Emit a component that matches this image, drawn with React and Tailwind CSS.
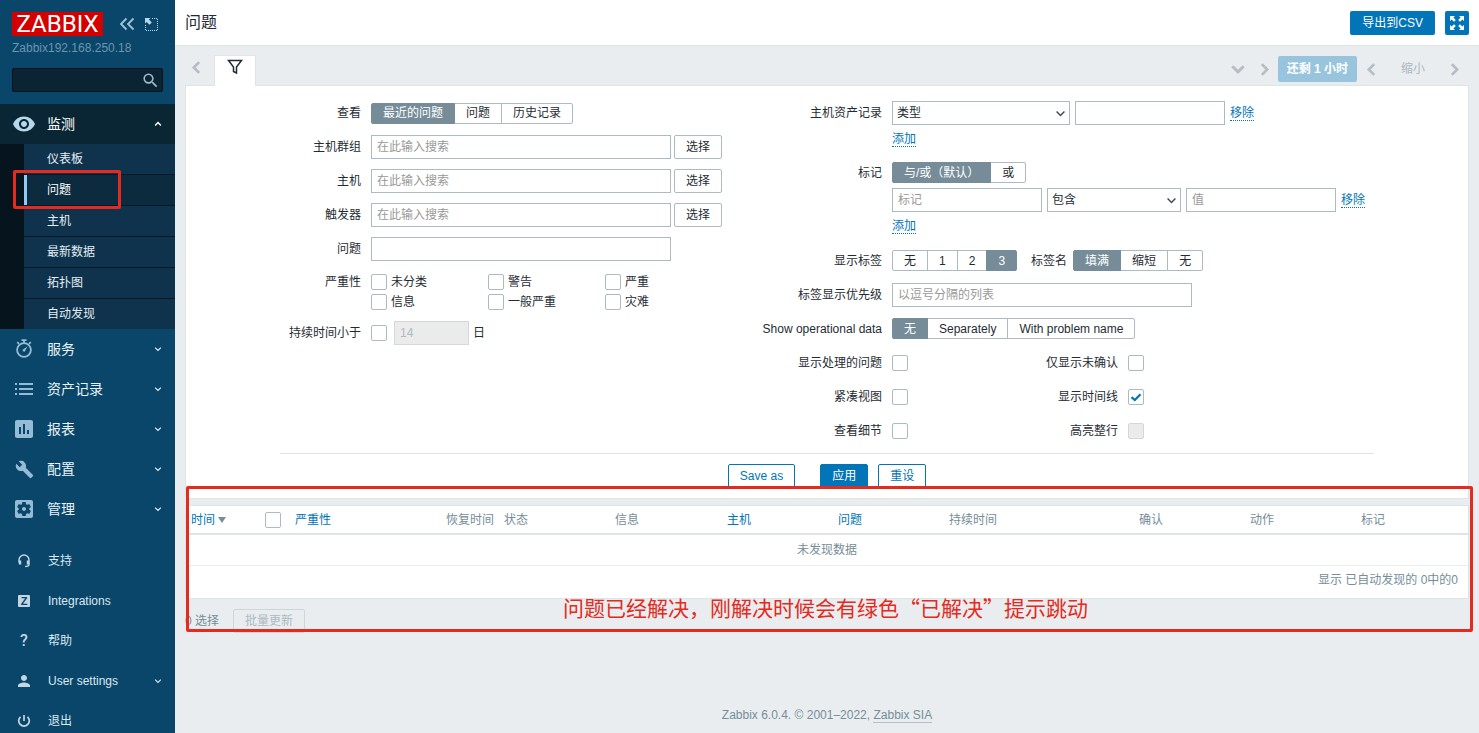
import React, { useState } from 'react'
import {
  MdVisibility,
  MdInsertChart,
  MdBuild,
  MdSettingsApplications,
  MdPerson,
  MdSearch,
} from 'react-icons/md'

const Chevron = ({ dir = 'down', size = 14, width = 2.5 }) => {
  const points = {
    down: '2,4.5 7,9.5 12,4.5',
    up: '2,9.5 7,4.5 12,9.5',
    left: '9.5,2 4.5,7 9.5,12',
    right: '4.5,2 9.5,7 4.5,12',
  }
  return (
    <svg width={size} height={size} viewBox="0 0 14 14" fill="none" stroke="currentColor" strokeWidth={width} aria-hidden="true">
      <polyline points={points[dir]} />
    </svg>
  )
}

const Stopwatch = () => (
  <svg width="20" height="20" viewBox="0 0 20 20" fill="none" stroke="currentColor" strokeWidth="1.8" aria-hidden="true">
    <circle cx="10" cy="11" r="6.9" />
    <path d="M7.500 1.100h5M10 1.100v3M3.200 3.100 5 4.900M16.800 3.100 15 4.900" />
    <path d="M8.600 10.700 13.400 7.500 10.800 12.500a1.600 1.600 0 0 1-2.200-1.800z" fill="currentColor" stroke="none" />
  </svg>
)

const List = () => (
  <svg width="18" height="12" viewBox="0 0 18 12" fill="none" stroke="currentColor" strokeWidth="2" aria-hidden="true">
    <path d="M0 1h2M0 6h2M0 11h2M4 1h14M4 6h14M4 11h14" />
  </svg>
)

const Headset = () => (
  <svg width="14" height="14" viewBox="0 0 14 14" fill="none" stroke="currentColor" aria-hidden="true">
    <path d="M2 8.500V6a5 5 0 0 1 10 0v4.500c0 1.400-1 2-3.800 2" strokeWidth="1.400" />
    <path d="M3 6.500v4M11 6.500v4" strokeWidth="2.400" />
  </svg>
)

const Power = () => (
  <svg width="14" height="14" viewBox="0 0 14 14" fill="none" stroke="currentColor" strokeWidth="1.700" aria-hidden="true">
    <path d="M7 1v6M3.500 2.800a5.300 5.300 0 1 0 7 0" />
  </svg>
)

const menu = [
  { label: '服务', icon: <Stopwatch /> },
  { label: '资产记录', icon: <List /> },
  { label: '报表', icon: <MdInsertChart size={24} /> },
  { label: '配置', icon: <MdBuild size={19} /> },
  { label: '管理', icon: <MdSettingsApplications size={24} /> },
]

const submenu = ['仪表板', '问题', '主机', '最新数据', '拓扑图', '自动发现']

const userMenu = [
  { label: '支持', icon: <Headset /> },
  { label: 'Integrations', icon: <span className="flex h-3 w-3 items-center justify-center rounded-[1px] bg-[#c3d6e3] text-[11px] font-bold leading-3 text-[#0a466a]">Z</span> },
  { label: '帮助', icon: <span className="font-['Roboto',sans-serif] text-base font-medium">?</span> },
  { label: 'User settings', icon: <MdPerson size={18} />, more: true },
  { label: '退出', icon: <Power /> },
]

const Sidebar = () => (
  <aside className="sticky top-0 flex h-screen w-[175px] shrink-0 flex-col overflow-hidden bg-[#0a466a] text-white">
    <div className="px-3 pt-3">
      <div className="flex items-center">
        <a href="#" className="flex h-6 w-[91px] items-center justify-center bg-[#d40000] font-['Roboto',sans-serif] text-2xl leading-6">ZABBIX</a>
        <button type="button" aria-label="收起侧边栏" className="ml-4 text-[#9fc3da]">
          <svg width="16" height="14" viewBox="0 0 16 14" fill="none" stroke="currentColor" strokeWidth="1.800">
            <path d="M7.500 1.500 2 7l5.500 5.500M14.500 1.500 9 7l5.500 5.500" />
          </svg>
        </button>
        <button type="button" aria-label="隐藏侧边栏" className="ml-2.5 text-[#b7d7eb]">
          <svg width="13" height="13" viewBox="0 0 13 13" fill="none" stroke="currentColor">
            <path d="M7 .5h5.500v12H.5V7" strokeDasharray="1 1" />
            <path d="M0 0h5.500L3.900 1.600 6.800 4.500 4.500 6.800 1.600 3.900 0 5.500z" fill="currentColor" stroke="none" />
          </svg>
        </button>
      </div>
      <div className="mt-1 h-4 text-xs leading-4 text-[#6b95b0]">Zabbix192.168.250.18</div>
      <form className="mt-3 flex h-6 items-center rounded-xs border border-[#06121b] bg-[#0b2433]">
        <input type="text" aria-label="搜索" className="h-full min-w-0 flex-1 bg-transparent px-1 text-xs outline-none" />
        <button type="button" aria-label="搜索" className="mr-0.5 text-[#9fb9ca]"><MdSearch size={19} /></button>
      </form>
    </div>
    <nav className="mt-3">
      <a href="#" className="flex h-10 items-center bg-[#0a2635] pr-[13px]">
        <span className="flex w-12 justify-center text-[#b7d7eb]"><MdVisibility size={24} /></span>
        <span className="-ml-px flex-1 text-sm">监测</span>
        <Chevron dir="up" size={8} />
      </a>
      <ul className="divide-y divide-[#06192a] border-l-[24px] border-[#06141e] bg-[#0f334c]">
        {submenu.map((item) => (
          <li key={item}>
            <a
              href="#"
              className={item === '问题' ? 'flex h-[30px] items-center border-l-3 border-[#8ecbf5] bg-[#0d2b3e] pl-5 text-xs' : 'flex h-[30px] items-center pl-[23px] text-xs text-[#e3eef5]'}
            >
              {item}
            </a>
          </li>
        ))}
      </ul>
      {menu.map((item) => (
        <a key={item.label} href="#" className="flex h-10 items-center pr-[13px] text-[#e8f2f8]">
          <span className="flex w-12 justify-center text-[#94bcd6]">{item.icon}</span>
          <span className="-ml-px flex-1 text-sm">{item.label}</span>
          <Chevron size={8} width={2} />
        </a>
      ))}
    </nav>
    <nav className="mt-3">
      {userMenu.map((item) => (
        <a key={item.label} href="#" className="flex h-10 items-center pr-[13px] text-xs text-[#dbe8f0]">
          <span className="flex w-12 justify-center text-[#c3d6e3]">{item.icon}</span>
          <span className="flex-1">{item.label}</span>
          {item.more && <Chevron size={8} width={2} />}
        </a>
      ))}
    </nav>
  </aside>
)

const Segmented = ({ name, label, options, initial }) => {
  const [value, setValue] = useState(initial)
  return (
    <div role="radiogroup" aria-label={label} className="flex h-[21px]">
      {options.map((opt) => (
        <label
          key={opt}
          className={
            value === opt
              ? 'z-10 -ml-px flex cursor-pointer items-center border border-[#768d99] bg-[#768d99] px-[11px] text-white first:ml-0 first:rounded-l-xs last:rounded-r-xs'
              : '-ml-px flex cursor-pointer items-center border border-[#acbbc2] bg-white px-[11px] first:ml-0 first:rounded-l-xs last:rounded-r-xs'
          }
        >
          <input type="radio" name={name} className="sr-only" checked={value === opt} onChange={() => setValue(opt)} />
          {opt}
        </label>
      ))}
    </div>
  )
}

const Checkbox = ({ id, label, checked = false, disabled }) => {
  const [on, setOn] = useState(checked)
  return (
    <span className="relative block h-4 w-4 shrink-0">
      <input
        id={id}
        type="checkbox"
        aria-label={label}
        checked={on}
        disabled={disabled}
        onChange={(e) => setOn(e.target.checked)}
        className="block h-4 w-4 appearance-none rounded-xs border border-[#acbbc2] bg-white disabled:border-[#d3d8da] disabled:bg-[#ebebeb]"
      />
      {on && (
        <svg className="pointer-events-none absolute inset-0" width="16" height="16" viewBox="0 0 16 16" fill="none" stroke="#0275b8" strokeWidth="2.200">
          <path d="M3.500 8.200 6.800 11 12.500 5.300" />
        </svg>
      )}
    </span>
  )
}

const TextInput = ({ className, ...props }) => (
  <input type="text" className={'h-6 border border-[#acbbc2] bg-white px-[5px] outline-none placeholder:text-[#999] disabled:border-[#d3d8da] disabled:bg-[#ebebeb] disabled:text-[#acbbc2] ' + className} {...props} />
)

const Select = ({ label, options, className }) => (
  <span className={'relative block ' + className}>
    <select aria-label={label} className="h-6 w-full appearance-none border border-[#acbbc2] bg-white px-1 outline-none">
      {options.map((o) => <option key={o}>{o}</option>)}
    </select>
    <span className="pointer-events-none absolute inset-y-0 right-1 flex items-center text-[#384a54]"><Chevron size={11} width={1.800} /></span>
  </span>
)

const DotLink = ({ children }) => (
  <a href="#" className="inline-block border-b border-dotted border-[#0275b8] leading-[14px] text-[#0275b8]">{children}</a>
)

// label column + field column of the filter form
const Row = ({ label, htmlFor, className = '', labelClass, children }) => (
  <div className={'flex items-center gap-2.5 ' + className}>
    {htmlFor
      ? <label htmlFor={htmlFor} className={'shrink-0 text-right ' + labelClass}>{label}</label>
      : <span className={'shrink-0 text-right ' + labelClass}>{label}</span>}
    {children}
  </div>
)

const severities = ['未分类', '警告', '严重', '信息', '一般严重', '灾难']
const pickers = [
  ['groups', '主机群组'],
  ['hosts', '主机'],
  ['triggers', '触发器'],
]
const flags = [
  ['显示处理的问题', '仅显示未确认'],
  ['紧凑视图', '显示时间线'],
  ['查看细节', '高亮整行'],
]

const Filter = () => (
  <form className="border border-[#dfe4e7] bg-white pt-[15px] pb-2.5">
    <div className="mx-auto max-w-[1094px]">
      <div className="flex gap-10">
        <div className="w-[442px]">
          <Row label="查看" labelClass="w-[81px]" className="mb-2.5 h-6">
            <Segmented name="show" label="查看" options={['最近的问题', '问题', '历史记录']} initial="最近的问题" />
          </Row>
          {pickers.map(([id, label]) => (
            <Row key={id} label={label} htmlFor={id} labelClass="w-[81px]" className="mb-2.5">
              <div className="flex gap-[3px]">
                <TextInput id={id} className="w-[300px]" placeholder="在此输入搜索" />
                <button type="button" className="h-6 rounded-xs border border-[#acbbc2] px-[11px]">选择</button>
              </div>
            </Row>
          ))}
          <Row label="问题" htmlFor="name" labelClass="w-[81px]" className="mb-[11px]">
            <TextInput id="name" className="w-[300px]" />
          </Row>
          <div className="mb-[9px] flex gap-2.5">
            <span className="w-[81px] text-right leading-5">严重性</span>
            <div className="grid grid-cols-[117px_117px_117px]">
              {severities.map((s) => (
                <label key={s} className="flex h-5 items-center gap-1"><Checkbox />{s}</label>
              ))}
            </div>
          </div>
          <Row label="持续时间小于" htmlFor="age" labelClass="w-[81px]">
            <div className="flex items-center">
              <Checkbox id="age" />
              <TextInput className="mr-1 ml-[7px] w-[75px]" aria-label="天数" defaultValue="14" disabled />
              日
            </div>
          </Row>
        </div>

        <div>
          <Row label="主机资产记录" labelClass="w-[120px]">
            <div className="flex items-center gap-[5px]">
              <Select label="主机资产记录" options={['类型', '名称', '别名']} className="w-[178px]" />
              <TextInput aria-label="资产值" className="w-[150px]" />
              <DotLink>移除</DotLink>
            </div>
          </Row>
          <div className="mt-1 flex h-5 items-center pl-[130px]"><DotLink>添加</DotLink></div>
          <Row label="标记" labelClass="w-[120px]" className="mt-[13px]">
            <Segmented name="evaltype" label="标记" options={['与/或（默认）', '或']} initial="与/或（默认）" />
          </Row>
          <div className="mt-[5px] flex items-center gap-[5px] pl-[130px]">
            <TextInput aria-label="标记" placeholder="标记" className="w-[150px]" />
            <Select label="运算符" options={['包含', '等于', '不包含']} className="w-[134px]" />
            <TextInput aria-label="值" placeholder="值" className="w-[150px]" />
            <DotLink>移除</DotLink>
          </div>
          <div className="mt-1 flex h-5 items-center pl-[130px]"><DotLink>添加</DotLink></div>
          <Row label="显示标签" labelClass="w-[120px]" className="mt-3.5">
            <Segmented name="show_tags" label="显示标签" options={['无', '1', '2', '3']} initial="3" />
            <span className="ml-1">标签名</span>
            <div className="-ml-1">
              <Segmented name="tag_name" label="标签名" options={['填满', '缩短', '无']} initial="填满" />
            </div>
          </Row>
          <Row label="标签显示优先级" htmlFor="priority" labelClass="w-[120px]" className="mt-3">
            <TextInput id="priority" className="w-[300px]" placeholder="以逗号分隔的列表" />
          </Row>
          <Row label="Show operational data" labelClass="w-[120px]" className="mt-[11px]">
            <Segmented name="opdata" label="Show operational data" options={['无', 'Separately', 'With problem name']} initial="无" />
          </Row>
          <div className="mt-3 flex flex-col gap-2.5">
            {flags.map(([left, right]) => (
              <Row key={left} label={left} htmlFor={left} labelClass="w-[120px]" className="h-6">
                <Checkbox id={left} />
                <label htmlFor={right} className="w-[200px] text-right">{right}</label>
                <Checkbox id={right} checked={right === '显示时间线'} disabled={right === '高亮整行'} />
              </Row>
            ))}
          </div>
        </div>
      </div>
      <div className="mt-2.5 flex justify-center border-t border-[#dfe4e7] pt-2.5">
        <button type="button" className="h-6 rounded-xs border border-[#0275b8] px-[11px] text-[#0275b8]">Save as</button>
        <button type="button" className="ml-[25px] h-6 rounded-xs border border-[#0275b8] bg-[#0275b8] px-[11px] text-white">应用</button>
        <button type="button" className="ml-2.5 h-6 rounded-xs border border-[#0275b8] px-[11px] text-[#0275b8]">重设</button>
      </div>
    </div>
  </form>
)

const ProblemTable = () => (
  <div className="mt-1.5 border border-[#dfe4e7] bg-white text-[#768d99]">
    <table className="w-full table-fixed border-collapse text-left">
      <colgroup>
        <col className="w-[74px]" />
        <col className="w-[30px]" />
        <col className="w-[151px]" />
        <col className="w-[58px]" />
        <col className="w-[111px]" />
        <col className="w-[112px]" />
        <col className="w-[111px]" />
        <col className="w-[111px]" />
        <col className="w-[190px]" />
        <col className="w-[111px]" />
        <col className="w-[111px]" />
        <col className="w-[112px]" />
      </colgroup>
      <thead>
        <tr className="h-7 border-b-2 border-[#dfe4e7] whitespace-nowrap *:px-[5px] *:font-normal">
          <th>
            <a href="#" className="flex items-center gap-[3px] text-[#0275b8]">
              时间
              <svg width="8" height="6" viewBox="0 0 8 6" fill="#768d99"><path d="M0 0h8L4 6z" /></svg>
            </a>
          </th>
          <th><Checkbox label="全选" /></th>
          <th><a href="#" className="text-[#0275b8]">严重性</a></th>
          <th>恢复时间</th>
          <th>状态</th>
          <th>信息</th>
          <th><a href="#" className="text-[#0275b8]">主机</a></th>
          <th><a href="#" className="text-[#0275b8]">问题</a></th>
          <th>持续时间</th>
          <th>确认</th>
          <th>动作</th>
          <th>标记</th>
        </tr>
      </thead>
      <tbody>
        <tr className="h-[31px] border-b border-[#ebeef0]">
          <td colSpan={12} className="text-center">未发现数据</td>
        </tr>
      </tbody>
    </table>
    <div className="h-8 pr-2.5 text-right leading-7">显示 已自动发现的 0中的0</div>
  </div>
)

const App = () => {
  return (
    <div className="flex min-h-screen bg-[#e9edf0] font-['Liberation_Sans','Noto_Sans_CJK_SC',sans-serif] text-xs text-[#1f2c33]">
      <Sidebar />
      <div className="flex min-w-0 flex-1 flex-col">
        <header className="flex h-[46px] items-center justify-between border-b border-[#dfe4e7] bg-white px-2.5">
          <h1 className="text-base">问题</h1>
          <div className="flex gap-2.5">
            <button type="button" className="h-6 rounded-xs bg-[#0275b8] px-3 text-white">导出到CSV</button>
            <button type="button" aria-label="全屏" className="flex h-6 w-6 items-center justify-center rounded-xs bg-[#0275b8] text-white">
              <svg width="14" height="14" viewBox="0 0 14 14" fill="currentColor">
                <path d="M0 0h5L3.400 1.600 5.800 4 4 5.800 1.600 3.400 0 5zM14 0v5l-1.600-1.600L10 5.800 8.200 4l2.400-2.400L9 0zM0 14V9l1.600 1.600L4 8.200 5.800 10l-2.400 2.400L5 14zM14 14H9l1.600-1.600L8.200 10 10 8.200l2.400 2.400L14 9z" />
              </svg>
            </button>
          </div>
        </header>

        <main className="relative flex-1 px-2.5">
          <div className="flex h-[39px] items-end justify-between">
            <div className="flex items-end">
              <button type="button" aria-label="上一个" className="mb-2.5 ml-1 text-[#b4bec4]"><Chevron dir="left" size={15} /></button>
              <button type="button" aria-label="过滤器" className="relative -mb-px ml-2.5 flex h-[31px] w-[42px] items-center justify-center border border-b-0 border-[#dfe4e7] bg-white pb-2">
                <svg width="16" height="16" viewBox="0 0 16 16" fill="none" stroke="#1f2c33" strokeWidth="1.500">
                  <path d="M1.500 1.500h13L9.500 8v6l-3-1.500V8z" />
                </svg>
              </button>
            </div>
            <div className="mb-[3px] flex h-[26px] items-center text-[#b4bec4]">
              <button type="button" aria-label="展开"><Chevron size={16} /></button>
              <button type="button" aria-label="下一个" className="ml-[11px]"><Chevron dir="right" size={15} /></button>
              <button type="button" className="ml-1.5 h-full rounded-xs bg-[#99c4dd] px-[9px] font-bold text-white">还剩 1 小时</button>
              <button type="button" aria-label="向前" className="ml-[7px]"><Chevron dir="left" size={15} /></button>
              <button type="button" className="ml-[22px] text-[#acb8be]">缩小</button>
              <button type="button" aria-label="向后" className="mr-[7px] ml-[22px]"><Chevron dir="right" size={15} /></button>
            </div>
          </div>
          <Filter />
          <ProblemTable />
          <div className="mt-2.5 flex items-center gap-3.5 text-[#768d99]">
            <span>0 选择</span>
            <button type="button" disabled className="h-6 rounded-xs border border-[#ccd5d9] px-[11px] text-[#acbbc2]">批量更新</button>
          </div>
          <div className="pointer-events-none absolute top-[440px] right-1.5 left-[11px] h-[146px] rounded-xs border-3 border-[#e52a20]">
            <p className="mt-[104px] -ml-2 text-center font-['Noto_Sans_CJK_SC',sans-serif] text-[21px] leading-[28px] text-[#e52a20]">
              问题已经解决，刚解决时候会有绿色“已解决”提示跳动
            </p>
          </div>
        </main>

        <footer className="pb-2.5 text-center leading-4 text-[#768d99]">
          Zabbix 6.0.4. © 2001–2022, <a href="#" className="border-b border-[#b4c0c7]">Zabbix SIA</a>
        </footer>
      </div>
      <div className="pointer-events-none absolute top-[170px] left-[13px] h-[39px] w-[108px] rounded-xs border-3 border-[#e52a20]" />
    </div>
  )
}

export default App
